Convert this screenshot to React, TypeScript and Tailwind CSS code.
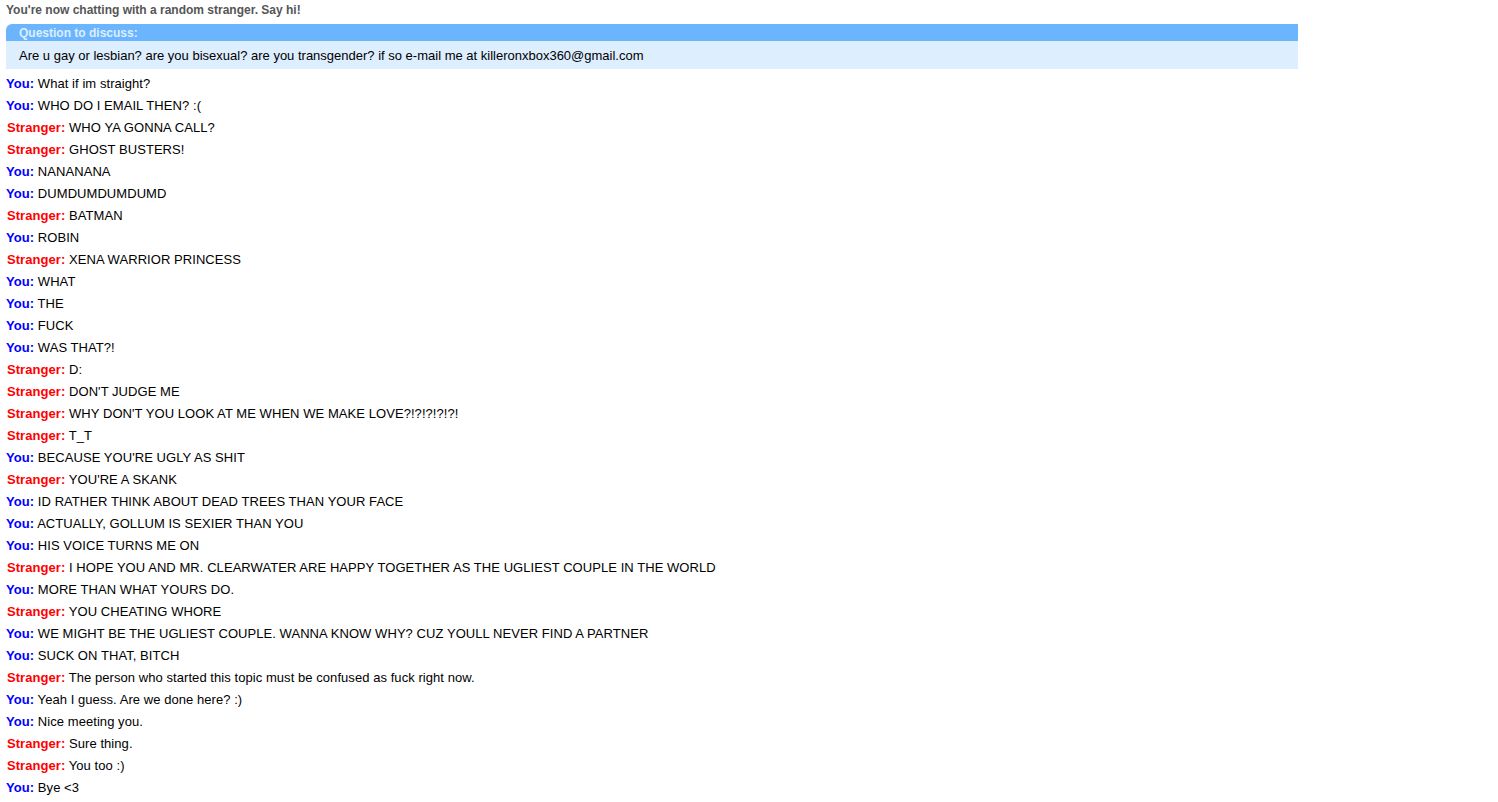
type Message = {
    from: 'you' | 'stranger';
    text: string;
};

const messages: Message[] = [
    { from: 'you', text: 'What if im straight?' },
    { from: 'you', text: 'WHO DO I EMAIL THEN? :(' },
    { from: 'stranger', text: 'WHO YA GONNA CALL?' },
    { from: 'stranger', text: 'GHOST BUSTERS!' },
    { from: 'you', text: 'NANANANA' },
    { from: 'you', text: 'DUMDUMDUMDUMD' },
    { from: 'stranger', text: 'BATMAN' },
    { from: 'you', text: 'ROBIN' },
    { from: 'stranger', text: 'XENA WARRIOR PRINCESS' },
    { from: 'you', text: 'WHAT' },
    { from: 'you', text: 'THE' },
    { from: 'you', text: 'FUCK' },
    { from: 'you', text: 'WAS THAT?!' },
    { from: 'stranger', text: 'D:' },
    { from: 'stranger', text: "DON'T JUDGE ME" },
    { from: 'stranger', text: "WHY DON'T YOU LOOK AT ME WHEN WE MAKE LOVE?!?!?!?!?!" },
    { from: 'stranger', text: 'T_T' },
    { from: 'you', text: "BECAUSE YOU'RE UGLY AS SHIT" },
    { from: 'stranger', text: "YOU'RE A SKANK" },
    { from: 'you', text: 'ID RATHER THINK ABOUT DEAD TREES THAN YOUR FACE' },
    { from: 'you', text: 'ACTUALLY, GOLLUM IS SEXIER THAN YOU' },
    { from: 'you', text: 'HIS VOICE TURNS ME ON' },
    { from: 'stranger', text: 'I HOPE YOU AND MR. CLEARWATER ARE HAPPY TOGETHER AS THE UGLIEST COUPLE IN THE WORLD' },
    { from: 'you', text: 'MORE THAN WHAT YOURS DO.' },
    { from: 'stranger', text: 'YOU CHEATING WHORE' },
    { from: 'you', text: 'WE MIGHT BE THE UGLIEST COUPLE. WANNA KNOW WHY? CUZ YOULL NEVER FIND A PARTNER' },
    { from: 'you', text: 'SUCK ON THAT, BITCH' },
    { from: 'stranger', text: 'The person who started this topic must be confused as fuck right now.' },
    { from: 'you', text: 'Yeah I guess. Are we done here? :)' },
    { from: 'you', text: 'Nice meeting you.' },
    { from: 'stranger', text: 'Sure thing.' },
    { from: 'stranger', text: 'You too :)' },
    { from: 'you', text: 'Bye <3' },
];

export default function App() {
    return (
        <div className="min-h-screen bg-white px-[6px] font-['Liberation_Sans',Arial,sans-serif] text-[13px] text-black">
            <p className="text-[12px] font-bold leading-[20px] text-[#555555]">
                You're now chatting with a random stranger. Say hi!
            </p>

            <div className="mt-[4px] w-[1292px]">
                <div className="h-[17px] rounded-tl-[6px] bg-[#6bb5ff] pl-[13px] pt-[1px] text-[12px] font-bold leading-[17px] text-[#ddeeff]">
                    Question to discuss:
                </div>
                <div className="h-[28px] bg-[#ddeeff] pl-[13px] pt-[1px] leading-[28px]">
                    Are u gay or lesbian? are you bisexual? are you transgender? if so e-mail me at killeronxbox360@gmail.com
                </div>
            </div>

            <div className="mt-[4px] tracking-[0.06px]">
                {messages.map((message, index) => (
                    <p key={index} className="leading-[22px]">
                        {message.from === 'you' ? (
                            <strong className="text-[#0000ff]">You:</strong>
                        ) : (
                            <strong className="pl-[1px] text-[#ff0000]">Stranger:</strong>
                        )}{' '}
                        {message.text}
                    </p>
                ))}
            </div>
        </div>
    );
}
